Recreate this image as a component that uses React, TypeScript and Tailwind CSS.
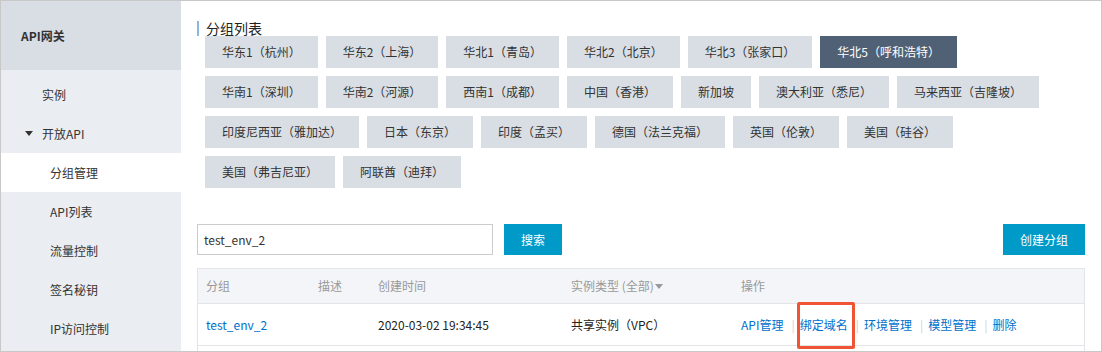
import { ReactNode } from "react";

const regionRows: string[][] = [
  ["华东1（杭州）", "华东2（上海）", "华北1（青岛）", "华北2（北京）", "华北3（张家口）", "华北5（呼和浩特）"],
  ["华南1（深圳）", "华南2（河源）", "西南1（成都）", "中国（香港）", "新加坡", "澳大利亚（悉尼）", "马来西亚（吉隆坡）"],
  ["印度尼西亚（雅加达）", "日本（东京）", "印度（孟买）", "德国（法兰克福）", "英国（伦敦）", "美国（硅谷）"],
  ["美国（弗吉尼亚）", "阿联酋（迪拜）"],
];

const active = "华北5（呼和浩特）";

const SideItem = ({ children, selected, indent }: { children: ReactNode; selected?: boolean; indent?: boolean }) => (
  <div
    className={`h-[39px] flex items-center text-[12px] text-[#333] ${indent ? "pl-[49px]" : "pl-[41px]"} ${
      selected ? "bg-white" : ""
    }`}
  >
    {children}
  </div>
);

const Sep = () => <span className="ml-[8px] mr-[5px] text-[#d0d0d0]">|</span>;

export default function App() {
  return (
    <div
      className="w-[1102px] h-[352px] border border-[#c8c8c8] flex overflow-hidden bg-white"
      style={{ fontFamily: '"Noto Sans CJK SC", "Noto Sans", sans-serif' }}
    >
      {/* sidebar */}
      <div className="w-[180px] shrink-0 bg-[#eaedf1]">
        <div className="h-[69px] bg-[#d9dee4] flex items-center pl-[20px] text-[12px] font-bold text-[#333]">
          API网关
        </div>
        <div className="pt-[5px]">
          <SideItem>实例</SideItem>
          <div className="h-[39px] flex items-center text-[12px] text-[#333] pl-[24px]">
            <svg width="8" height="5" viewBox="0 0 8 5" className="mr-[9px]">
              <path d="M0 0h8L4 5z" fill="#333" />
            </svg>
            开放API
          </div>
          <SideItem selected indent>
            分组管理
          </SideItem>
          <SideItem indent>API列表</SideItem>
          <SideItem indent>流量控制</SideItem>
          <SideItem indent>签名秘钥</SideItem>
          <SideItem indent>IP访问控制</SideItem>
        </div>
      </div>

      {/* main */}
      <div className="flex-1 pl-[16px] pr-[16px] pt-[20px]">
        <div className="h-[15px] flex items-center border-l-2 border-[#88b7e0] pl-[7px] text-[14px] leading-[15px] text-[#222]">
          分组列表
        </div>

        <div className="ml-[8px] flex flex-col gap-2">
          {regionRows.map((row, i) => (
            <div key={i} className="flex gap-2">
              {row.map((r) => (
                <div
                  key={r}
                  className={`h-8 px-[17px] flex items-center text-[12px] whitespace-nowrap ${
                    r === active ? "bg-[#506176] text-white" : "bg-[#d9dee4] text-[#333]"
                  }`}
                >
                  {r}
                </div>
              ))}
            </div>
          ))}
        </div>

        <div className="mt-[36px] flex items-center">
          <div className="w-[296px] h-[31px] border border-[#cccccc] flex items-center pl-[6px] text-[12px] text-[#333]">
            test_env_2
          </div>
          <button className="ml-[11px] w-[58px] h-[31px] bg-[#009ac9] text-white text-[12px]">搜索</button>
          <button className="ml-auto w-[82px] h-[31px] bg-[#009ac9] text-white text-[12px]">创建分组</button>
        </div>

        <div className="mt-[13px] border border-[#e3e5e9] text-[12px]">
          <div className="h-[34px] bg-[#f4f5f8] grid grid-cols-[112px_60px_193px_170px_1fr] items-center pl-[8px] text-[#999]">
            <span>分组</span>
            <span>描述</span>
            <span>创建时间</span>
            <span className="flex items-center">
              实例类型 (全部)
              <svg width="8" height="5" viewBox="0 0 8 5" className="ml-[1px]">
                <path d="M0 0h8L4 5z" fill="#999" />
              </svg>
            </span>
            <span>操作</span>
          </div>
          <div className="h-[42px] border-t border-[#e3e5e9] grid grid-cols-[112px_60px_193px_170px_1fr] items-center pl-[8px]">
            <span className="text-[#0070cc]">test_env_2</span>
            <span />
            <span className="text-[#222]">2020-03-02 19:34:45</span>
            <span className="text-[#222]">共享实例（VPC）</span>
            <span className="flex items-center text-[#0070cc] whitespace-nowrap">
              API管理
              <Sep />
              <span className="relative leading-[20px]">
                绑定域名
                <span className="absolute left-[-3px] top-[-13px] w-[58px] h-[47px] border-[3px] border-[#ef5534] rounded-[2px]" />
              </span>
              <Sep />
              环境管理
              <Sep />
              模型管理
              <Sep />
              删除
            </span>
          </div>
          <div className="h-[20px] border-t border-[#e3e5e9]" />
        </div>
      </div>
    </div>
  );
}
